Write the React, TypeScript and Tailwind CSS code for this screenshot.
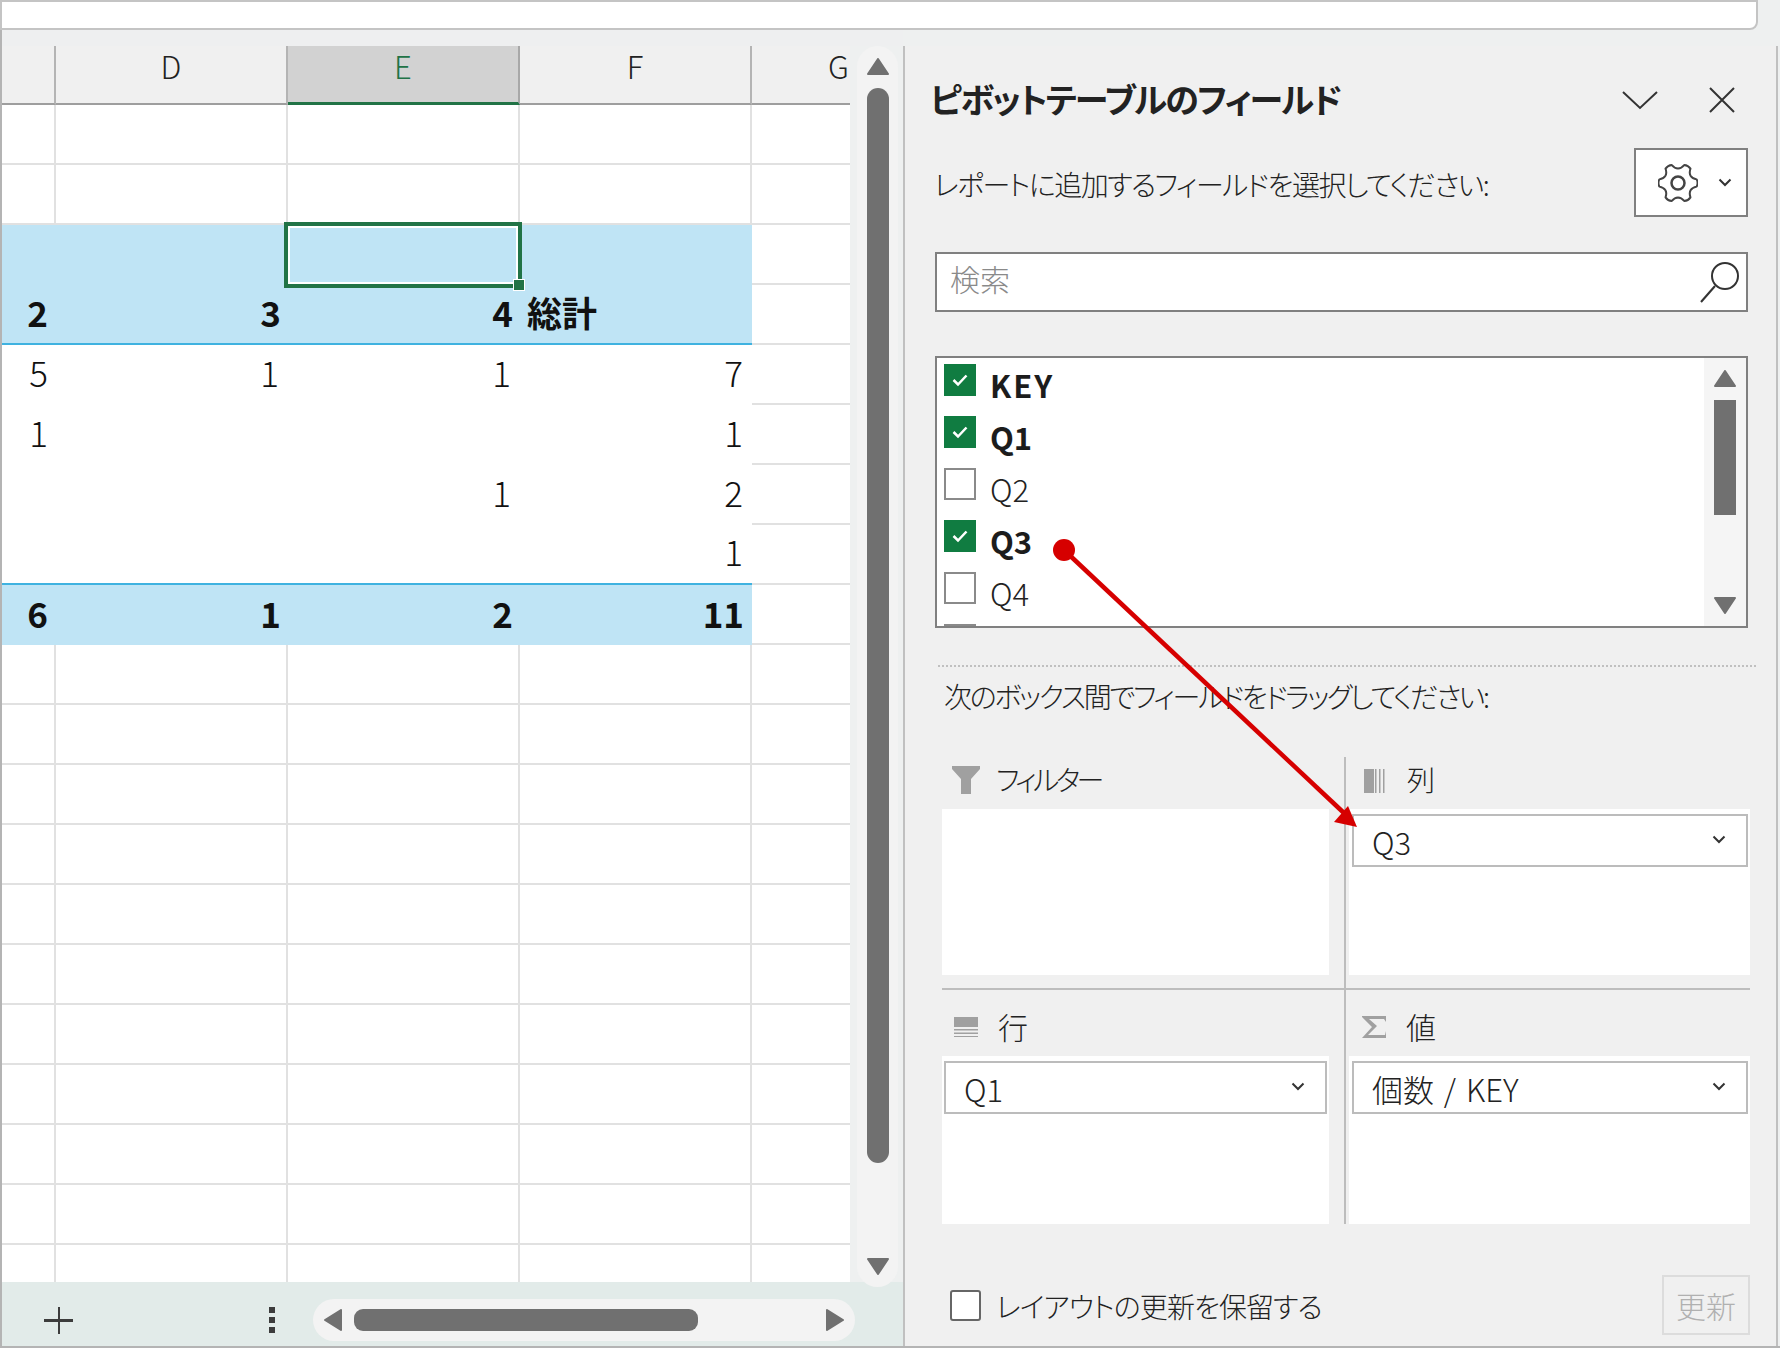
import React from 'react';

const gearPath = () => {
  // six rounded teeth, one pointing right
  const pt = (deg: number, r: number) => {
    const a = (deg * Math.PI) / 180;
    return `${(20 + r * Math.cos(a)).toFixed(2)} ${(20 + r * Math.sin(a)).toFixed(2)}`;
  };
  let d = '';
  for (let i = 0; i < 6; i++) {
    const a = i * 60;
    d += `${i === 0 ? 'M' : 'L'}${pt(a - 30, 14.5)} `;
    d += `Q${pt(a - 17, 15)} ${pt(a - 11, 19)} Q${pt(a, 20.5)} ${pt(a + 11, 19)} Q${pt(a + 17, 15)} ${pt(a + 30, 14.5)} `;
  }
  return d + 'Z';
};

const Chevron = ({ className = '' }: { className?: string }) => (
  <svg width="14" height="9" viewBox="0 0 14 9" className={className}>
    <path d="M1.5 1.5 L7 7 L12.5 1.5" fill="none" stroke="#333" strokeWidth="2" />
  </svg>
);

const ScrollArrow = ({ dir, w = 22, h = 17 }: { dir: 'up' | 'down' | 'left' | 'right'; w?: number; h?: number }) => {
  const pts = {
    up: `${w / 2},1 ${w - 1},${h - 1} 1,${h - 1}`,
    down: `1,1 ${w - 1},1 ${w / 2},${h - 1}`,
    left: `${w - 1},1 ${w - 1},${h - 1} 1,${h / 2}`,
    right: `1,1 ${w - 1},${h / 2} 1,${h - 1}`,
  }[dir];
  return (
    <svg width={w} height={h} viewBox={`0 0 ${w} ${h}`} className="shrink-0">
      <polygon points={pts} fill="#707070" stroke="#707070" strokeWidth="2" strokeLinejoin="round" />
    </svg>
  );
};

type RowData = { kind: 'blank' | 'blue' | 'data' | 'headtotal' | 'total'; vals?: string[] };

const rows: RowData[] = [
  { kind: 'blank' },
  { kind: 'blank' },
  { kind: 'blue' },
  { kind: 'headtotal', vals: ['2', '3', '4', '総計'] },
  { kind: 'data', vals: ['5', '1', '1', '7'] },
  { kind: 'data', vals: ['1', '', '', '1'] },
  { kind: 'data', vals: ['', '', '1', '2'] },
  { kind: 'data', vals: ['', '', '', '1'] },
  { kind: 'total', vals: ['6', '1', '2', '11'] },
  ...Array.from({ length: 11 }, () => ({ kind: 'blank' as const })),
];

const SheetRow = ({ row, index }: { row: RowData; index: number }) => {
  const last = index === 7 || index === 3;
  const gCell = <div className="h-full w-[98px] border-b-2 border-[#e1e1e1]" />;
  if (row.kind === 'blank') {
    return (
      <div className="flex h-[60px] shrink-0">
        <div className="h-full w-[54px] border-r-2 border-b-2 border-[#e1e1e1]" />
        <div className="h-full w-[232px] border-r-2 border-b-2 border-[#e1e1e1]" />
        <div className="h-full w-[232px] border-r-2 border-b-2 border-[#e1e1e1]" />
        <div className="h-full w-[232px] border-r-2 border-b-2 border-[#e1e1e1]" />
        {gCell}
      </div>
    );
  }
  const blue = row.kind !== 'data';
  const bold = row.kind === 'headtotal' || row.kind === 'total';
  const vals = row.vals ?? ['', '', '', ''];
  return (
    <div className="flex h-[60px] shrink-0">
      <div
        className={`flex h-full w-[750px] text-[35px] leading-none text-[#111] ${blue ? 'bg-[#bfe4f5]' : 'bg-white'} ${
          bold ? 'pb-[5px] font-bold' : 'pb-[7px] font-light'
        } ${last ? 'border-b-2 border-[#3fb2e0]' : ''}`}
      >
        <div className="flex w-[54px] items-center justify-end pr-[8px]">{vals[0]}</div>
        <div className={`flex w-[232px] items-center justify-end ${bold ? 'pr-[7px]' : 'pr-[9px]'}`}>{vals[1]}</div>
        <div className={`flex w-[232px] items-center justify-end ${bold ? 'pr-[7px]' : 'pr-[9px]'}`}>{vals[2]}</div>
        {row.kind === 'headtotal' ? (
          <div className="flex w-[232px] items-center pl-[7px]">{vals[3]}</div>
        ) : (
          <div className={`flex w-[232px] items-center justify-end ${bold ? 'pr-[8px]' : 'pr-[9px]'}`}>{vals[3]}</div>
        )}
      </div>
      {gCell}
    </div>
  );
};

const HeaderCell = ({ label, width, active }: { label: string; width: string; active?: boolean }) => (
  <div
    className={`flex h-full justify-center border-r-2 pt-[4px] text-[31px] leading-none font-light ${width} ${
      active ? 'border-b-[3px] border-b-[#217346] border-r-[#a8a8a8] bg-[#d2d2d2] text-[#217346]' : 'border-b-2 border-b-[#9e9e9e] border-r-[#b4b4b4] bg-[#f0f0f0] text-[#222]'
    }`}
  >
    {label}
  </div>
);

const FieldRow = ({ label, checked }: { label: string; checked?: boolean }) => (
  <div className="flex h-[52px] shrink-0 pl-[7px]">
    {checked ? (
      <div className="flex h-[32px] w-[32px] shrink-0 items-center justify-center bg-[#107c41]">
        <svg width="18" height="14" viewBox="0 0 18 14">
          <path d="M2.5 7 L7 11.5 L15.5 2.5" fill="none" stroke="#fff" strokeWidth="2.5" />
        </svg>
      </div>
    ) : (
      <div className="h-[32px] w-[32px] shrink-0 border-2 border-[#8a8a8a] bg-white" />
    )}
    {label && (
      <div
        className={`ml-[14px] text-[31px] leading-[42px] ${checked ? 'font-bold text-[#1c1c1c]' : 'font-light text-[#222]'} ${
          label === 'KEY' ? 'tracking-[2px]' : ''
        }`}
      >
        {label}
      </div>
    )}
  </div>
);

const Dropdown = ({ label, chevronRight, margin }: { label: string; chevronRight: string; margin: string }) => (
  <div className={`mt-[5px] flex h-[53px] items-center border-2 border-[#bcbcbc] bg-white pl-[18px] text-[31px] leading-none font-light text-[#222] [word-spacing:3px] ${margin}`}>
    <span className="pt-[1px]">{label}</span>
    <Chevron className={`ml-auto mb-[2px] ${chevronRight}`} />
  </div>
);

const FilterIcon = () => (
  <svg width="28" height="28" viewBox="0 0 28 28">
    <polygon points="0,0 28,0 28,3 19,13 19,28 9,28 9,13 0,3" fill="#a0a0a0" />
  </svg>
);

const ColumnIcon = () => (
  <svg width="21" height="24" viewBox="0 0 21 24" fill="#a0a0a0">
    <rect x="0" y="0" width="10" height="24" />
    <rect x="11" y="0" width="1.5" height="24" />
    <rect x="15" y="0" width="1.5" height="24" />
    <rect x="19" y="0" width="1.5" height="24" />
  </svg>
);

const RowIcon = () => (
  <svg width="24" height="20" viewBox="0 0 24 20" fill="#a0a0a0">
    <rect x="0" y="0" width="24" height="10" />
    <rect x="0" y="12" width="24" height="1.5" />
    <rect x="0" y="15.5" width="24" height="1.5" />
    <rect x="0" y="19" width="24" height="1.5" />
  </svg>
);

const SigmaIcon = () => (
  <svg width="24" height="22" viewBox="0 0 24 22">
    <polygon points="0,0 24,0 24,6 22,3 7,3 15,10 6,19 23,19 24,15 24,22 0,22 10,11 0,1" fill="#a0a0a0" />
  </svg>
);

export default function App() {
  return (
    <div className="relative flex h-[1348px] w-[1780px] flex-col overflow-hidden border-b-2 border-[#b4b4b4] bg-[#eef0f0] [font-family:'Noto_Sans_CJK_JP',sans-serif] [font-feature-settings:'palt']">
      {/* formula bar remainder */}
      <div className="h-[30px] w-[1758px] shrink-0 rounded-br-lg border-t-2 border-r-2 border-b-2 border-l-2 border-[#c4c4c4] bg-white" />

      <div className="flex min-h-0 flex-1">
        {/* sheet side */}
        <div className="flex w-[903px] shrink-0 flex-col border-l-2 border-[#b4b4b4]">
          <div className="h-[16px] shrink-0 bg-[#eeeff0]" />
          <div className="flex h-[1236px] shrink-0">
            <div className="flex h-full w-[848px] shrink-0 flex-col overflow-hidden bg-white">
              <div className="flex h-[59px] shrink-0">
                <div className="h-full w-[54px] border-r-2 border-b-2 border-r-[#b4b4b4] border-b-[#9e9e9e] bg-[#f0f0f0]" />
                <HeaderCell label="D" width="w-[232px]" />
                <HeaderCell label="E" width="w-[232px]" active />
                <HeaderCell label="F" width="w-[232px]" />
                <div className="h-full w-[98px] border-b-2 border-[#9e9e9e] bg-[#f0f0f0] pt-[4px] pl-[76px] text-[31px] leading-none font-light text-[#222]">
                  G
                </div>
              </div>
              {rows.map((row, i) => (
                <SheetRow key={i} row={row} index={i} />
              ))}
              <div className="flex min-h-0 flex-1">
                <div className="h-full w-[54px] border-r-2 border-[#e1e1e1]" />
                <div className="h-full w-[232px] border-r-2 border-[#e1e1e1]" />
                <div className="h-full w-[232px] border-r-2 border-[#e1e1e1]" />
                <div className="h-full w-[232px] border-r-2 border-[#e1e1e1]" />
              </div>
            </div>
            {/* vertical scrollbar */}
            <div className="relative z-10 ml-[7px] -mb-[5px] flex h-[1241px] w-[41px] shrink-0 flex-col items-center rounded-full bg-[#f3f3f3] pt-[12px]">
              <ScrollArrow dir="up" />
              <div className="mt-[13px] h-[1075px] w-[22px] rounded-full bg-[#707070]" />
              <div className="mt-[95px]">
                <ScrollArrow dir="down" />
              </div>
            </div>
          </div>
          {/* tabs strip */}
          <div className="flex min-h-0 flex-1 items-center bg-[#e2ebe9] pt-[12px]">
            <div className="relative ml-[42px] h-[27px] w-[29px] shrink-0">
              <div className="absolute top-[12px] left-0 h-[3px] w-[29px] bg-[#3c3c3c]" />
              <div className="absolute top-0 left-[14px] h-[27px] w-[2px] bg-[#3c3c3c]" />
            </div>
            <div className="ml-[196px] flex h-[26px] w-[6px] shrink-0 flex-col justify-between">
              <div className="h-[6px] bg-[#3c3c3c]" />
              <div className="h-[6px] bg-[#3c3c3c]" />
              <div className="h-[6px] bg-[#3c3c3c]" />
            </div>
            <div className="ml-[38px] flex h-[42px] w-[542px] shrink-0 items-center rounded-[21px] bg-[#f3f3f3] pr-[11px] pl-[11px]">
              <ScrollArrow dir="left" w={18} h={22} />
              <div className="ml-[12px] h-[22px] w-[344px] rounded-[9px] bg-[#707070]" />
              <div className="ml-auto">
                <ScrollArrow dir="right" w={18} h={22} />
              </div>
            </div>
          </div>
        </div>

        {/* pivot field panel */}
        <div className="mt-[16px] flex w-[875px] shrink-0 flex-col border-r-2 border-l-2 border-[#c0c0c0] bg-[#f0f0f0]">
          <div className="flex h-[102px] shrink-0 items-center pt-[6px] pr-[41px] pl-[25px]">
            <div className="flex-1 pb-[4px] text-[34px] font-bold tracking-[-1.8px] text-[#222]">ピボットテーブルのフィールド</div>
            <svg width="36" height="19" viewBox="0 0 36 19">
              <path d="M1 1 L18 17 L35 1" fill="none" stroke="#333" strokeWidth="2" />
            </svg>
            <svg width="26" height="26" viewBox="0 0 26 26" className="ml-[51px]">
              <path d="M1 1 L25 25 M25 1 L1 25" fill="none" stroke="#333" strokeWidth="2" />
            </svg>
          </div>

          <div className="flex h-[69px] shrink-0 items-center pr-[28px] pl-[29px]">
            <div className="flex-1 pt-[3px] text-[28px] font-light tracking-[-1.5px] text-[#222]">レポートに追加するフィールドを選択してください:</div>
            <div className="flex h-[69px] w-[114px] items-center border-2 border-[#808080] bg-white pl-[22px]">
              <svg width="40" height="40" viewBox="0 0 40 40">
                <path d={gearPath()} fill="none" stroke="#444" strokeWidth="2" strokeLinejoin="round" />
                <circle cx="20" cy="20" r="6.5" fill="none" stroke="#444" strokeWidth="2.5" />
              </svg>
              <Chevron className="ml-[20px]" />
            </div>
          </div>

          <div className="mt-[35px] mr-[28px] ml-[30px] flex h-[60px] shrink-0 items-center border-2 border-[#808080] bg-white pr-[7px] pl-[13px]">
            <div className="flex-1 pb-[8px] text-[30px] leading-none font-light text-[#8a8a8a]">検索</div>
            <svg width="40" height="41" viewBox="0 0 40 41">
              <circle cx="26" cy="14" r="13" fill="none" stroke="#333" strokeWidth="2" />
              <path d="M16 24 L2 40" fill="none" stroke="#333" strokeWidth="2" />
            </svg>
          </div>

          <div className="mt-[44px] mr-[28px] ml-[30px] flex h-[272px] shrink-0 overflow-hidden border-2 border-[#808080] bg-white">
            <div className="flex flex-1 flex-col overflow-hidden pt-[6px]">
              <FieldRow label="KEY" checked />
              <FieldRow label="Q1" checked />
              <FieldRow label="Q2" />
              <FieldRow label="Q3" checked />
              <FieldRow label="Q4" />
              <FieldRow label="" />
            </div>
            <div className="flex w-[42px] shrink-0 flex-col items-center bg-[#f5f5f5] pt-[12px]">
              <ScrollArrow dir="up" />
              <div className="mt-[13px] h-[115px] w-[22px] bg-[#707070]" />
              <div className="mt-[82px]">
                <ScrollArrow dir="down" />
              </div>
            </div>
          </div>

          <div className="mt-[37px] mr-[20px] ml-[33px] shrink-0 border-t-2 border-dotted border-[#c0c0c0]" />
          <div className="mt-[9px] h-[40px] shrink-0 pl-[39px] text-[28px] leading-[40px] font-light tracking-[-2.3px] text-[#222]">
            次のボックス間でフィールドをドラッグしてください:
          </div>

          <div className="mt-[41px] ml-[37px] grid w-[808px] shrink-0 grid-cols-[404px_404px] grid-rows-[233px_234px] text-[28px] font-light text-[#222]">
            <div className="flex flex-col border-r-2 border-b-2 border-[#bdbdbd] pr-[15px]">
              <div className="flex h-[52px] items-center pb-[8px] pl-[10px]">
                <div className="w-[44px] pt-[2px]">
                  <FilterIcon />
                </div>
                <span className="tracking-[-3.6px]">フィルター</span>
              </div>
              <div className="h-[166px] bg-white" />
            </div>
            <div className="flex flex-col border-b-2 border-[#bdbdbd] pl-[3px]">
              <div className="flex h-[52px] items-center pb-[8px] pl-[15px]">
                <div className="w-[43px] pt-[4px]">
                  <ColumnIcon />
                </div>
                列
              </div>
              <div className="flex h-[166px] flex-col bg-white">
                <Dropdown label="Q3" chevronRight="mr-[20px]" margin="mr-[2px] ml-[3px]" />
              </div>
            </div>
            <div className="flex flex-col border-r-2 border-[#bdbdbd] pr-[15px]">
              <div className="flex h-[66px] items-center pt-[7px] pl-[12px] text-[30px]">
                <div className="w-[44px]">
                  <RowIcon />
                </div>
                行
              </div>
              <div className="flex h-[168px] flex-col bg-white">
                <Dropdown label="Q1" chevronRight="mr-[20px]" margin="mx-[2px]" />
              </div>
            </div>
            <div className="flex flex-col pl-[3px]">
              <div className="flex h-[66px] items-center pt-[7px] pl-[13px] text-[30px]">
                <div className="w-[44px]">
                  <SigmaIcon />
                </div>
                値
              </div>
              <div className="flex h-[168px] flex-col bg-white">
                <Dropdown label="個数 / KEY" chevronRight="mr-[20px]" margin="mr-[2px] ml-[3px]" />
              </div>
            </div>
          </div>

          <div className="mt-[51px] ml-[45px] flex h-[60px] w-[800px] shrink-0 items-center text-[28px] font-light text-[#222]">
            <div className="h-[31px] w-[31px] rounded-[3px] border-2 border-[#666] bg-white" />
            <div className="ml-[15px] pt-[2px] tracking-[-0.9px]">レイアウトの更新を保留する</div>
            <div className="ml-auto flex h-[60px] w-[88px] items-center justify-center border-2 border-[#dcdcdc] text-[30px] text-[#b0b0b0]">更新</div>
          </div>
        </div>
      </div>

      {/* active cell selection */}
      <div className="absolute top-[222px] left-[284px] h-[66px] w-[238px] border-4 border-[#217346] outline-2 -outline-offset-6 outline-white" />
      <div className="absolute top-[279px] left-[513px] h-[12px] w-[12px] border border-white bg-[#217346]" />

      {/* red drag arrow */}
      <svg className="pointer-events-none absolute top-0 left-0" width="1780" height="1348" viewBox="0 0 1780 1348">
        <circle cx="1064" cy="550" r="11" fill="#d60000" />
        <path d="M1064 550 L1344 813" stroke="#d60000" strokeWidth="4.5" />
        <polygon points="1357,827 1334,822 1348,806" fill="#d60000" />
      </svg>
    </div>
  );
}
